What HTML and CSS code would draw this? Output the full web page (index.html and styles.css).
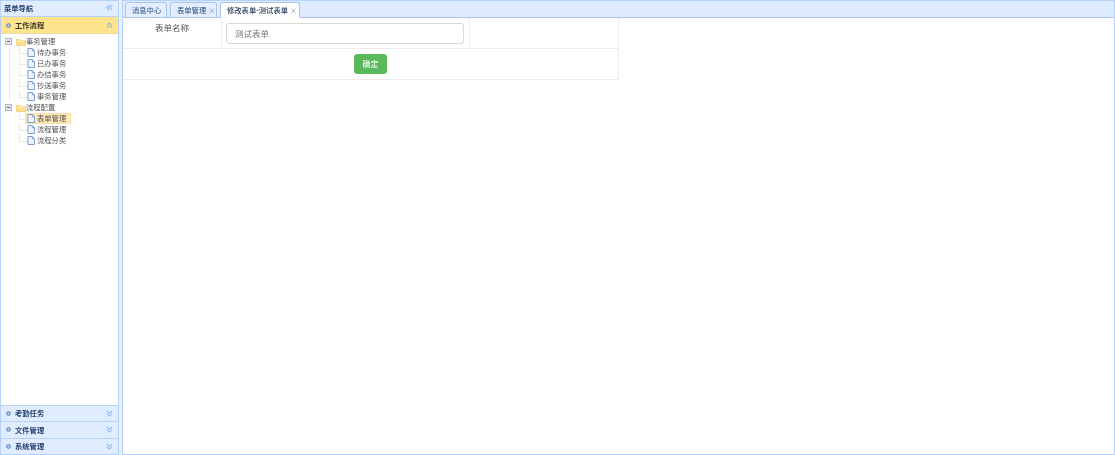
FILE: index.html
```html
<!DOCTYPE html>
<html lang="zh">
<head>
<meta charset="utf-8">
<title>工作流程</title>
<link rel="stylesheet" href="styles.css">
</head>
<body>
<svg class="defs" width="0" height="0" aria-hidden="true">
  <symbol id="file" viewBox="0 0 9 10"><path d="M1 .5h5l2.500 2.500v6.500H1z" fill="#eef4ff" stroke="#6f95cf"/><path d="M6 .5v2.500h2.500" fill="#cfe0f8" stroke="#6f95cf"/></symbol>
  <symbol id="folder" viewBox="0 0 11 9"><path d="M.5 8.500v-7h3.500l1 1.200h5.500v5.800z" fill="#fde08a" stroke="#edcf7c"/><path d="M.8 3.500h9.400" stroke="#fff0b8"/></symbol>
  <symbol id="minus" viewBox="0 0 7 7"><rect x=".5" y=".5" width="6" height="6" fill="#e4e8ee" stroke="#b0b9c4"/><path d="M2 3.500h3" stroke="#56606c"/></symbol>
  <symbol id="dot" viewBox="0 0 5 5"><circle cx="2.500" cy="2.500" r="1.800" fill="#b9d2f2" stroke="#4476b8"/></symbol>
  <symbol id="down" viewBox="0 0 7 7"><path d="M.8 1l2.700 2.200L6.200 1M.8 3.800l2.700 2.200 2.700-2.200" fill="none" stroke="#9cc3ef" stroke-width="1.300"/></symbol>
  <symbol id="up" viewBox="0 0 7 7"><path d="M.8 3.200L3.500 1l2.700 2.200M.8 6l2.700-2.200L6.200 6" fill="none" stroke="#a9c0ae" stroke-width="1.300"/></symbol>
  <symbol id="left" viewBox="0 0 7 7"><path d="M3.200.8L1 3.500l2.200 2.700M6 .8L3.800 3.500 6 6.200" fill="none" stroke="#9cc3ef" stroke-width="1.300"/></symbol>
</svg>
<div class="app">
  <aside class="side">
    <div class="side-title"><span>菜单导航</span><svg class="arrow"><use href="#left"/></svg></div>
    <div class="acc-head active"><svg class="dot"><use href="#dot"/></svg><span class="acc-label">工作流程</span><svg class="arrow"><use href="#up"/></svg></div>
    <div class="tree-wrap">
      <ul class="tree">
        <li class="node"><svg class="tog"><use href="#minus"/></svg><svg class="folder"><use href="#folder"/></svg><span>事务管理</span></li>
        <li class="node leaf mid"><div class="leaf-body"><svg class="file"><use href="#file"/></svg><span>待办事务</span></div></li>
        <li class="node leaf mid"><div class="leaf-body"><svg class="file"><use href="#file"/></svg><span>已办事务</span></div></li>
        <li class="node leaf mid"><div class="leaf-body"><svg class="file"><use href="#file"/></svg><span>办结事务</span></div></li>
        <li class="node leaf mid"><div class="leaf-body"><svg class="file"><use href="#file"/></svg><span>抄送事务</span></div></li>
        <li class="node leaf mid"><div class="leaf-body"><svg class="file"><use href="#file"/></svg><span>事务管理</span></div></li>
        <li class="node"><svg class="tog"><use href="#minus"/></svg><svg class="folder"><use href="#folder"/></svg><span>流程配置</span></li>
        <li class="node leaf"><div class="leaf-body selected"><svg class="file"><use href="#file"/></svg><span>表单管理</span></div></li>
        <li class="node leaf"><div class="leaf-body"><svg class="file"><use href="#file"/></svg><span>流程管理</span></div></li>
        <li class="node leaf"><div class="leaf-body"><svg class="file"><use href="#file"/></svg><span>流程分类</span></div></li>
      </ul>
    </div>
    <div class="acc-head"><svg class="dot"><use href="#dot"/></svg><span class="acc-label">考勤任务</span><svg class="arrow"><use href="#down"/></svg></div>
    <div class="acc-head"><svg class="dot"><use href="#dot"/></svg><span class="acc-label">文件管理</span><svg class="arrow"><use href="#down"/></svg></div>
    <div class="acc-head"><svg class="dot"><use href="#dot"/></svg><span class="acc-label">系统管理</span><svg class="arrow"><use href="#down"/></svg></div>
  </aside>
  <main class="main">
    <div class="tabs">
      <div class="tab t1"><span>消息中心</span></div>
      <div class="tab t2"><span>表单管理</span><span class="x">×</span></div>
      <div class="tab t3 current"><span>修改表单-测试表单</span><span class="x">×</span></div>
    </div>
    <div class="content">
      <form class="form">
        <div class="cell label">表单名称</div>
        <div class="cell field"><div class="input">测试表单</div></div>
        <div class="cell blank"></div>
        <div class="cell actions"><button type="button" class="btn">确定</button></div>
      </form>
    </div>
  </main>
</div>
</body>
</html>
```
FILE: styles.css
```css
* { box-sizing: border-box; }
html, body { margin: 0; height: 100%; background: #fff; overflow: hidden; }
body { font-family: "Noto Sans CJK SC", "Liberation Sans", sans-serif; color: #333; }
.defs { position: absolute; }
.app { display: flex; gap: 3px; width: 1115px; height: 455px; background: #e6effd; filter: blur(0.4px); }

.side { width: 119px; flex: none; display: flex; flex-direction: column; border: 1px solid #b7d2f8; background: #fff; }
.side-title { height: 15px; flex: none; display: flex; align-items: center; justify-content: space-between; padding: 0 5px 2px 3px; background: #e0ecff; font-size: 7.300px; font-weight: 700; color: #2a4370; white-space: nowrap; }
.arrow { width: 7px; height: 7px; flex: none; }
.acc-head { height: 16.500px; flex: none; display: flex; align-items: center; padding: 0 5px; background: #e0ecff; border-top: 1px solid #b7d2f8; font-size: 7.300px; font-weight: 700; color: #2a4370; white-space: nowrap; }
.acc-head.active { background: #ffe48d; color: #3a3a2a; border-bottom: 1px solid #e8d9a6; height: 18px; }
.dot { width: 5px; height: 5px; flex: none; }
.acc-label { margin-left: 4px; flex: 1; }

.tree-wrap { flex: 1; min-height: 0; padding-top: 2px; }
.tree { list-style: none; margin: 0; padding: 0; }
.node { height: 11px; display: flex; align-items: center; font-size: 7.300px; color: #555; position: relative; padding-left: 4px; white-space: nowrap; }
.tog { width: 7px; height: 7px; flex: none; }
.folder { width: 10px; height: 8px; flex: none; margin-left: 4px; }
.node > span { line-height: 11px; }
.leaf { padding-left: 24px; }
.leaf::before { content: ""; position: absolute; left: 18px; top: -1px; width: 7px; height: 7px; border-left: 1px solid #e6e9ed; border-bottom: 1px solid #e6e9ed; }
.mid::after { content: ""; position: absolute; left: 8px; top: -1px; height: 12px; border-left: 1px solid #e6e9ed; }
.leaf-body { display: flex; align-items: center; height: 11px; width: 46px; padding-left: 2px; }
.file { width: 8px; height: 9px; flex: none; }
.leaf-body > span { margin: 0 0 2px 2px; }
.selected { background: #ffe9b8; box-shadow: inset 0 0 0 1px #f9dda3; }

.main { flex: 1; min-width: 0; display: flex; flex-direction: column; border: 1px solid #b7d2f8; background: #fff; }
.tabs { height: 17px; flex: none; display: flex; align-items: flex-end; gap: 3px; padding-left: 2px; background: #deeaff; border-bottom: 1px solid #a9c6ea; }
.tab { height: 16px; flex: none; margin-bottom: -1px; padding: 0 0 0 6px; display: flex; align-items: center; gap: 2px; background: #e4eeff; border: 1px solid #a9c6ea; border-radius: 3px 3px 0 0; font-size: 7.300px; color: #2a4a80; white-space: nowrap; }
.t1 { width: 42px; }
.t2 { width: 47px; }
.t3 { width: 80px; font-weight: 500; }
.current { background: #fff; border-bottom-color: #fff; color: #2a3d5c; }
.x { font-size: 7px; color: #6f88aa; font-weight: 400; line-height: 1; }

.content { flex: 1; min-height: 0; background: #fff; }
.form { width: 496px; display: grid; grid-template-columns: 99px 248px 1fr; grid-template-rows: 31px 30px; border: 1px solid #ececec; border-width: 0 1px 1px 0; }
.label { border-right: 1px solid #ececec; border-bottom: 1px solid #ececec; font-size: 8.500px; color: #555; text-align: center; padding-top: 3px; line-height: 13px; }
.field { border-right: 1px solid #ececec; border-bottom: 1px solid #ececec; padding: 5px 4px 0; }
.blank { border-bottom: 1px solid #ececec; }
.input { height: 21px; width: 238px; border: 1px solid #d8d8d8; border-radius: 3px; padding: 0 8px; font-size: 8.500px; line-height: 19px; color: #777; background: #fff; }
.actions { grid-column: 1 / -1; display: flex; justify-content: center; align-items: flex-start; padding-top: 5px; }
.btn { width: 33px; height: 20px; padding: 0 0 1px; border: 1px solid #5cb85c; border-radius: 3px; background: #5cb85c; color: #e8f6e8; font: 500 8px "Noto Sans CJK SC", sans-serif; }
```
